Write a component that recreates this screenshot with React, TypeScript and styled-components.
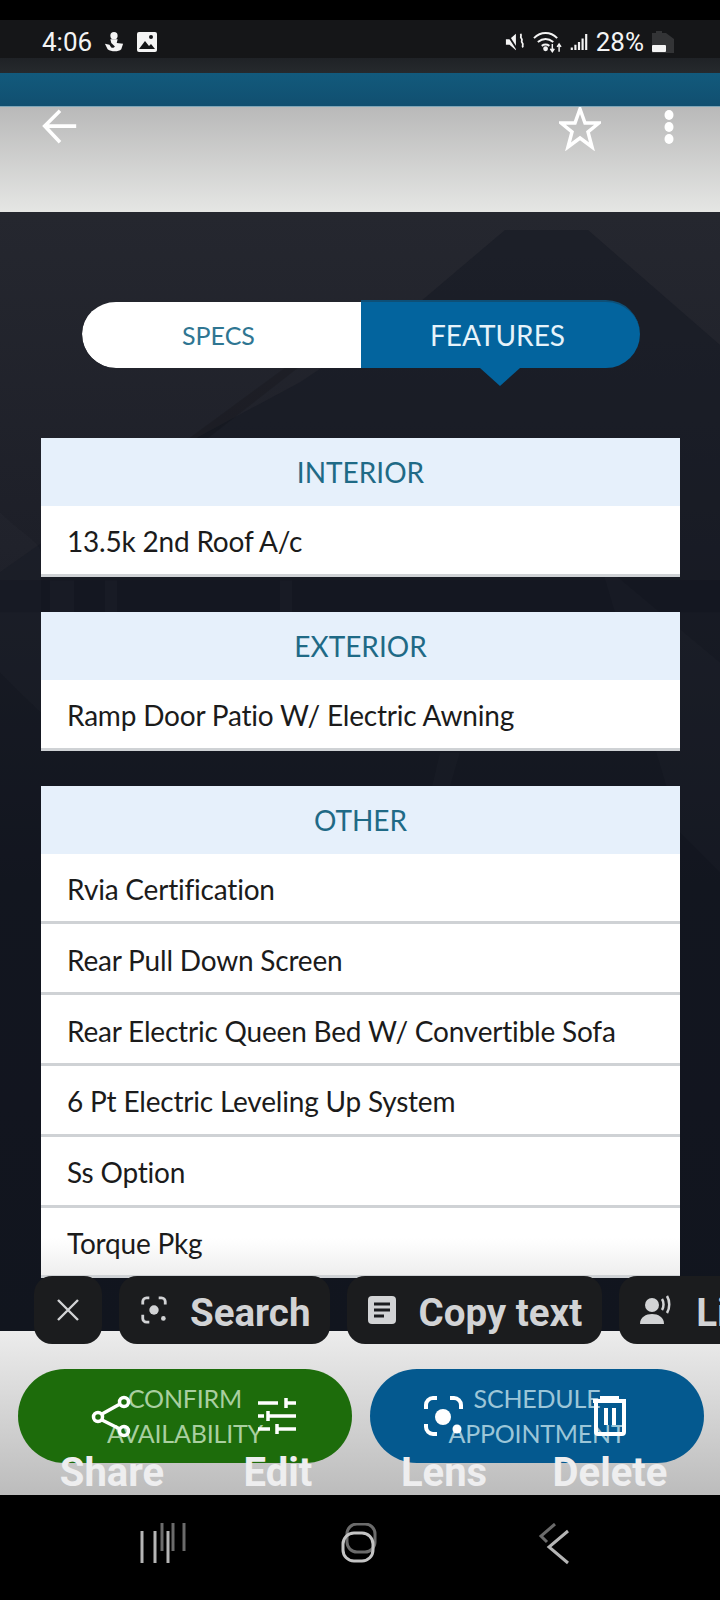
import React from 'react';
import styled, { createGlobalStyle } from 'styled-components';

const GlobalStyle = createGlobalStyle`
  html, body {
    margin: 0;
    padding: 0;
    background: #000;
  }
`;

const Page = styled.div`
  position: relative;
  width: 720px;
  height: 1600px;
  overflow: hidden;
  display: flex;
  flex-direction: column;
  font-family: Lato, "Liberation Sans", sans-serif;
`;

const TopBlack = styled.div`
  height: 20px;
  background: #000;
`;

const StatusBar = styled.div`
  box-sizing: border-box;
  height: 38px;
  padding: 6px 45px 0 42px;
  background: #151618;
  display: flex;
  align-items: center;
  color: #f4f4f4;
  font-family: Roboto, sans-serif;
  font-size: 26px;
`;

const StatusGroup = styled.div`
  display: flex;
  align-items: center;
  gap: 12px;
`;

const StatusRight = styled(StatusGroup)`
  margin-left: auto;
  gap: 8px;
`;

const Strip = styled.div`
  height: 15px;
  background: linear-gradient(#1f2226, #262a2d);
`;

const BlueBand = styled.div`
  box-sizing: border-box;
  height: 34px;
  background: linear-gradient(#125a7c, #114f70);
  border-bottom: 1px solid #7fa6b8;
`;

const AppHeader = styled.div`
  box-sizing: border-box;
  height: 105px;
  padding: 0 45px 0 42px;
  background: linear-gradient(#b9b9b9, #e5e6e4);
  display: flex;
  align-items: flex-start;
`;

const HeaderActions = styled.div`
  margin-left: auto;
  display: flex;
  gap: 62px;
`;

const Main = styled.main`
  position: relative;
  flex: 1;
  overflow: hidden;
  background: linear-gradient(#25272f, #1d1f28 30%, #11141d 60%, #0f121b);
`;

const Backdrop = styled.svg`
  position: absolute;
  inset: 0;
  width: 100%;
  height: 100%;
`;

const Content = styled.div`
  position: relative;
  padding: 88px 40px 0 41px;
  display: flex;
  flex-direction: column;
`;

const Tabs = styled.div`
  align-self: center;
  display: flex;
  width: 558px;
  height: 68px;
  margin-bottom: 70px;
`;

const Tab = styled.div<{ $active?: boolean }>`
  position: relative;
  flex: 1;
  padding-right: 5px;
  display: flex;
  align-items: center;
  justify-content: center;
  border-radius: ${(p) => (p.$active ? '0 34px 34px 0' : '34px 0 0 34px')};
  background: ${(p) => (p.$active ? '#03649e' : '#fff')};
  color: ${(p) => (p.$active ? '#e6f3fa' : '#2f7692')};
  font-size: ${(p) => (p.$active ? '28px' : '25px')};
  border-top: 2px solid ${(p) => (p.$active ? '#0e5078' : 'transparent')};
  background-clip: ${(p) => (p.$active ? 'border-box' : 'padding-box')};

  ${(p) =>
    p.$active &&
    `&::after {
      content: '';
      position: absolute;
      top: 100%;
      left: 50%;
      margin-left: -20px;
      border-left: 20px solid transparent;
      border-right: 20px solid transparent;
      border-top: 18px solid #03649e;
    }`}
`;

const Card = styled.section`
  margin-bottom: 35px;
  background: #fff;
`;

const CardTitle = styled.div`
  height: 68px;
  display: flex;
  align-items: center;
  justify-content: center;
  background: #e6f0fb;
  color: #1f6a86;
  font-size: 28px;
`;

const Row = styled.div<{ $fade?: boolean }>`
  box-sizing: border-box;
  height: 70.8px;
  padding: 3px 0 0 26px;
  display: flex;
  align-items: center;
  border-bottom: 3px solid #cfd2d5;
  background: ${(p) => (p.$fade ? 'linear-gradient(#fff 45%, #eeeeee)' : '#fff')};
  color: #1b1b1b;
  font-size: 28px;
  letter-spacing: -0.2px;
`;

const BottomBar = styled.div`
  box-sizing: border-box;
  height: 164px;
  padding: 38px 16px 0 18px;
  background: linear-gradient(#ececec, #bcbcbc);
  display: flex;
  justify-content: space-between;
`;

const Cta = styled.div<{ $color: string; $text: string }>`
  width: 334px;
  height: 94px;
  border-radius: 47px;
  display: flex;
  align-items: center;
  justify-content: center;
  text-align: center;
  background: ${(p) => p.$color};
  color: ${(p) => p.$text};
  font-size: 25px;
  line-height: 35px;
  letter-spacing: -0.2px;
`;

const NavBar = styled.div`
  box-sizing: border-box;
  height: 105px;
  background: #000;
  display: flex;
  align-items: flex-start;
  justify-content: space-between;
  padding: 28px 150px 0 140px;
`;

const HomeIcon = styled.svg`
  margin-right: 8px;
`;

const ChipBar = styled.div`
  position: absolute;
  left: 34px;
  top: 1276px;
  display: flex;
  gap: 17px;
`;

const Chip = styled.div`
  box-sizing: border-box;
  height: 68px;
  padding: 0 20px;
  border-radius: 18px;
  background: #1b1c1e;
  display: flex;
  align-items: center;
  gap: 21px;
  color: #d2d3d5;
  font-family: Roboto, sans-serif;
  font-weight: 700;
  font-size: 38.5px;
  white-space: nowrap;
`;

const ChipLabel = styled.span`
  padding-top: 4px;
`;

const CloseChip = styled(Chip)`
  width: 68px;
  padding: 0;
  justify-content: center;
`;

const EditActions = styled.div`
  position: absolute;
  left: 29px;
  top: 1388px;
  display: grid;
  grid-template-columns: repeat(4, 166px);
`;

const EditAction = styled.div`
  display: flex;
  flex-direction: column;
  align-items: center;
  color: #eeeeef;
  font-family: Roboto, sans-serif;
  font-weight: 700;
  font-size: 40px;
  line-height: 42px;
`;

const EditIcon = styled.svg`
  width: 56px;
  height: 56px;
  margin-bottom: 8px;
`;

const BackIcon = styled.svg`
  width: 36px;
  height: 36px;
  margin-top: 2px;
`;

const HeaderIcon = styled.svg<{ $w: number }>`
  width: ${(p) => p.$w}px;
  height: 44px;
`;

const StatusIcon = styled.svg<{ $w: number }>`
  width: ${(p) => p.$w}px;
  height: 24px;
`;

const features = [
  { title: 'INTERIOR', rows: ['13.5k 2nd Roof A/c'] },
  { title: 'EXTERIOR', rows: ['Ramp Door Patio W/ Electric Awning'] },
  {
    title: 'OTHER',
    rows: [
      'Rvia Certification',
      'Rear Pull Down Screen',
      'Rear Electric Queen Bed W/ Convertible Sofa',
      '6 Pt Electric Leveling Up System',
      'Ss Option',
      'Torque Pkg',
    ],
  },
];

const App = () => {
  return (
    <Page>
      <GlobalStyle />
      <TopBlack />
      <StatusBar>
        <StatusGroup>
          <span>4:06</span>
          <StatusIcon $w={20} viewBox="0 0 22 24" fill="#f4f4f4">
            <circle cx="11" cy="5" r="4" />
            <path d="M7 9h8l-1 4 7 1-2 6c-3 3-11 3-15 0l-3-6 5 1 2 3c2 1 3 0 4-1l-4-4z" />
          </StatusIcon>
          <StatusIcon $w={22} viewBox="1 1 22 22">
            <rect x="2" y="2" width="20" height="20" rx="2" fill="#f4f4f4" />
            <path d="M4 19l6-8 4 5 2-2 4 5z" fill="#151618" />
            <circle cx="16" cy="7" r="2" fill="#151618" />
          </StatusIcon>
        </StatusGroup>
        <StatusRight>
          <StatusIcon $w={20} viewBox="0 0 22 24" fill="#f4f4f4">
            <path d="M1 9h4l7-6v18l-7-6H1z" />
            <path d="M1 1l13 20" stroke="#151618" strokeWidth="2" />
            <path d="M17 3c2 2-1 3 1 5s-1 3 1 5-1 3 1 5" fill="none" stroke="#f4f4f4" strokeWidth="2" />
          </StatusIcon>
          <StatusIcon $w={29} viewBox="0 0 30 24" fill="none" stroke="#f4f4f4" strokeWidth="2">
            <path d="M1 8c7-7 17-7 24 0M5 12c5-4 11-4 16 0M9 16c3-2 5-2 8 0" />
            <circle cx="13" cy="19" r="1.5" fill="#f4f4f4" />
            <path d="M20 14v8M27 22v-8M18 19l2 3 2-3M25 17l2-3 2 3" strokeWidth="1.5" />
          </StatusIcon>
          <StatusIcon $w={18} viewBox="0 0 20 24" stroke="#f4f4f4" strokeWidth="2.4">
            <path d="M2 21v-3M6 21v-6M10 21v-9M14 21v-13M18 21V3" />
          </StatusIcon>
          <span>28%</span>
          <StatusIcon $w={23} viewBox="0 0 23 24">
            <path d="M4 1h6v2h4l8 6v14H0V3h4z" fill="#333436" />
            <rect x="0" y="15" width="14" height="7" rx="1" fill="#f4f4f4" />
          </StatusIcon>
        </StatusRight>
      </StatusBar>
      <Strip />
      <BlueBand />
      <AppHeader>
        <BackIcon viewBox="0 0 40 40" fill="none" stroke="#fff" strokeWidth="4">
          <path d="M38 19H5M20 2L3 19l17 18" />
        </BackIcon>
        <HeaderActions>
          <HeaderIcon $w={42} viewBox="0 0 42 44" fill="none" stroke="#fff" strokeWidth="3.5">
            <path d="M21 2l5 14h14L29 25l4 15-12-9-12 9 4-15L2 16h14z" />
          </HeaderIcon>
          <HeaderIcon $w={12} viewBox="0 0 12 44" fill="#fff">
            <ellipse cx="6" cy="8" rx="4.5" ry="5" />
            <ellipse cx="6" cy="20" rx="4.5" ry="5" />
            <ellipse cx="6" cy="32" rx="4.5" ry="5" />
          </HeaderIcon>
        </HeaderActions>
      </AppHeader>
      <Main>
        <Backdrop viewBox="0 0 720 1118" preserveAspectRatio="none">
          <path d="M170 240L300 170 420 90 505 18H588L720 133V1118H0V360z" fill="#141722" opacity="0.5" />
          <path d="M170 240L320 130 326 134 190 240z" fill="#000000" opacity="0.12" />
          <path d="M0 368h720v32H0z" fill="#0d1019" opacity="0.3" />
          <path d="M50 368h24v32H50zM105 368h12v32h-12zM280 368h12v32h-12z" fill="#ffffff" opacity="0.02" />
          <path d="M0 300C20 320 40 330 41 340V500C20 480 10 470 0 460z" fill="#ffffff" opacity="0.015" />
          <path d="M440 540h20l-10 34h-18zM600 350L720 450V660L680 620z" fill="#ffffff" opacity="0.015" />
        </Backdrop>
        <Content>
          <Tabs>
            <Tab>SPECS</Tab>
            <Tab $active>FEATURES</Tab>
          </Tabs>
          {features.map((group) => (
            <Card key={group.title}>
              <CardTitle>{group.title}</CardTitle>
              {group.rows.map((row) => (
                <Row key={row} $fade={row === 'Torque Pkg'}>
                  {row}
                </Row>
              ))}
            </Card>
          ))}
        </Content>
      </Main>
      <BottomBar>
        <Cta $color="#1d6c0b" $text="#a9cfa0">
          CONFIRM
          <br />
          AVAILABILITY
        </Cta>
        <Cta $color="#04598f" $text="#9cc6d8">
          SCHEDULE
          <br />
          APPOINTMENT
        </Cta>
      </BottomBar>
      <NavBar>
        <svg width="48" height="42" viewBox="0 0 48 42" stroke="#b5b5b5" strokeWidth="3">
          <path d="M2 8v32M15 8v32M28 8v32" />
          <path d="M22 0v28M33 0v28M44 0v28" stroke="#6b6b6b" />
        </svg>
        <HomeIcon width="36" height="42" viewBox="0 0 36 42" fill="none" strokeWidth="3">
          <rect x="6" y="1" width="28" height="28" rx="10" stroke="#6b6b6b" />
          <rect x="2" y="10" width="30" height="28" rx="11" stroke="#c4c4c4" />
        </HomeIcon>
        <svg width="32" height="42" viewBox="0 0 32 42" fill="none" strokeWidth="3">
          <path d="M17 1L3 13l6 6" stroke="#6b6b6b" />
          <path d="M30 8L11 24l19 16" stroke="#b5b5b5" />
        </svg>
      </NavBar>
      <ChipBar>
        <CloseChip>
          <svg width="24" height="24" viewBox="0 0 24 24" stroke="#d2d3d5" strokeWidth="2.4">
            <path d="M2 2l20 20M22 2L2 22" />
          </svg>
        </CloseChip>
        <Chip>
          <svg width="30" height="30" viewBox="0 0 30 32" fill="none" stroke="#d2d3d5" strokeWidth="3">
            <path d="M3 10V7a4 4 0 0 1 4-4h3M20 3h3a4 4 0 0 1 4 4v3M3 21v4a4 4 0 0 0 4 4h3" />
            <circle cx="15" cy="16" r="5" fill="#d2d3d5" stroke="none" />
            <circle cx="25" cy="25" r="2.5" fill="#d2d3d5" stroke="none" />
          </svg>
          <ChipLabel>Search</ChipLabel>
        </Chip>
        <Chip>
          <svg width="30" height="32" viewBox="0 0 30 32">
            <rect x="1" y="2" width="28" height="28" rx="4" fill="#d2d3d5" />
            <path d="M7 10h16M7 16h16M7 22h10" stroke="#1b1c1e" strokeWidth="3" />
          </svg>
          <ChipLabel>Copy text</ChipLabel>
        </Chip>
        <Chip>
          <svg width="36" height="32" viewBox="0 0 36 32" fill="#d2d3d5">
            <circle cx="13" cy="11" r="7" />
            <path d="M1 30c0-7 6-10 12-10s12 3 12 10z" />
            <path d="M23 5c2 3 2 8 0 11M28 2c3 5 3 12 0 17" fill="none" stroke="#d2d3d5" strokeWidth="2.5" />
          </svg>
          <ChipLabel>Listen</ChipLabel>
        </Chip>
      </ChipBar>
      <EditActions>
        <EditAction>
          <EditIcon viewBox="0 0 56 56" fill="none" stroke="#fff" strokeWidth="3.5">
            <path d="M18 26L36 16M18 32l18 9" />
            <circle cx="14" cy="29" r="4.5" />
            <circle cx="40" cy="14" r="4.5" />
            <circle cx="40" cy="43" r="4.5" />
          </EditIcon>
          Share
        </EditAction>
        <EditAction>
          <EditIcon viewBox="0 0 56 56" fill="none" stroke="#fff" strokeWidth="3.5">
            <path d="M8 15h20M36 15h10M36 10v10M8 28h6M18 28h28M18 23v10M8 41h12M27 41h19M27 36v10" />
          </EditIcon>
          Edit
        </EditAction>
        <EditAction>
          <EditIcon viewBox="0 0 56 56" fill="none" stroke="#fff" strokeWidth="4">
            <path d="M10 21v-4a7 7 0 0 1 7-7h4M34 10h4a7 7 0 0 1 7 7v4M10 36v3a7 7 0 0 0 7 7h4" />
            <circle cx="27" cy="29" r="8" fill="#fff" stroke="none" />
            <circle cx="41" cy="41" r="4.5" fill="#fff" stroke="none" />
          </EditIcon>
          Lens
        </EditAction>
        <EditAction>
          <EditIcon viewBox="0 0 56 56" fill="none" stroke="#fff" strokeWidth="4">
            <path d="M11 13h33M20 13V10h15v3M14 13v31a2 2 0 0 0 2 2h24a2 2 0 0 0 2-2V13M24 20v17M32 20v17" />
          </EditIcon>
          Delete
        </EditAction>
      </EditActions>
    </Page>
  );
};

export default App;
